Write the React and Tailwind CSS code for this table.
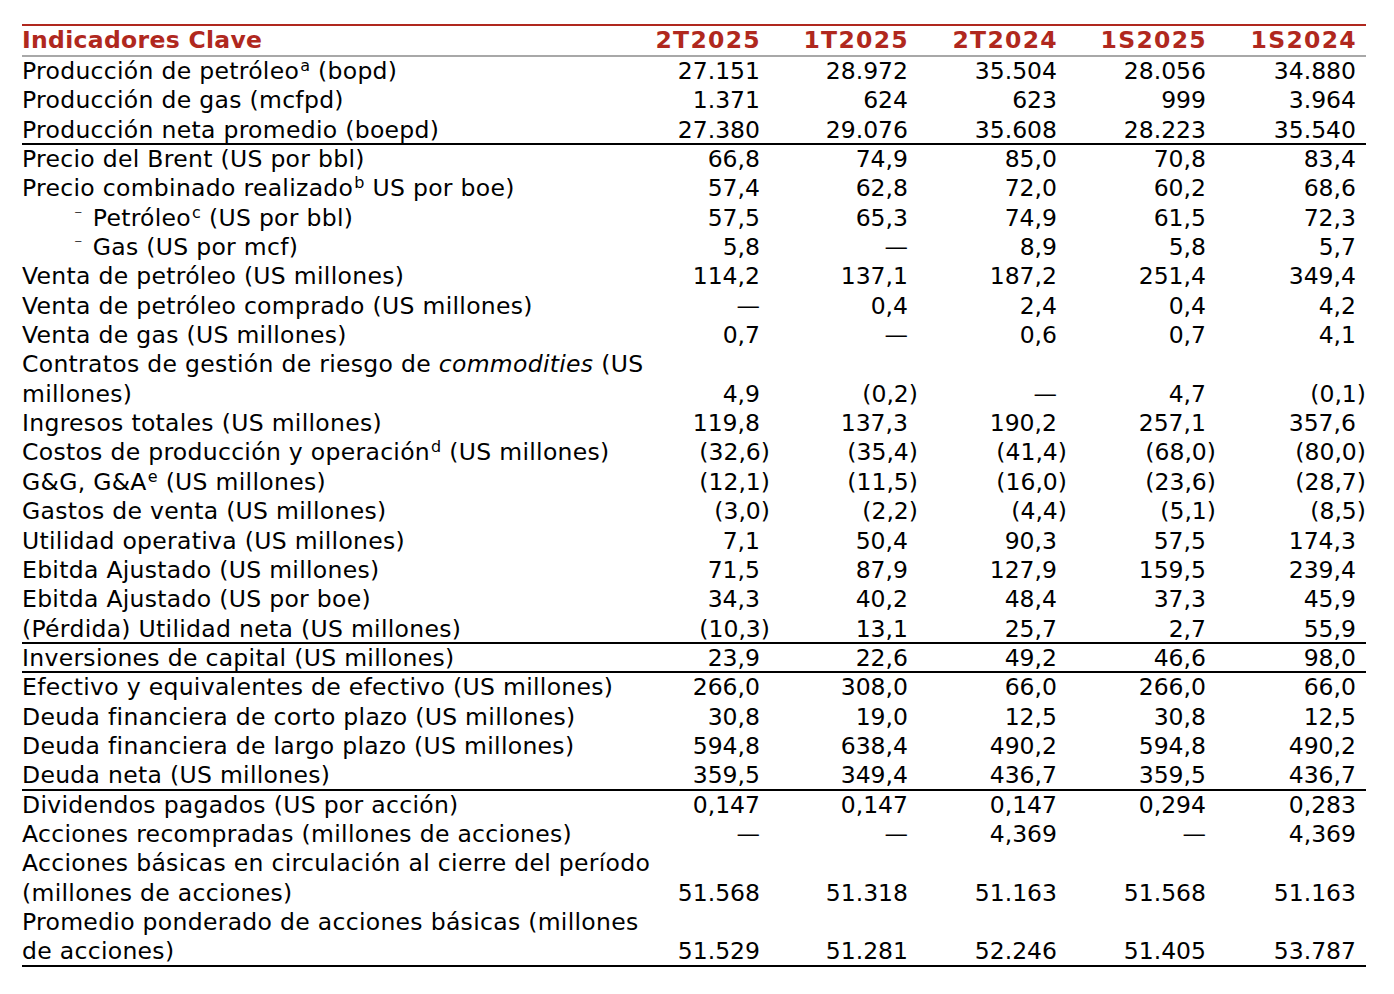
import React from "react";

const RED = "text-[#b0281e]";

const cols = ["2T2025", "1T2025", "2T2024", "1S2025", "1S2024"];

const Sup = ({ children }) => <sup className="text-[16px] ml-[1px]">{children}</sup>;

const rows = [
  { label: <>Producción de petróleo<Sup>a</Sup> (bopd)</>, v: ["27.151", "28.972", "35.504", "28.056", "34.880"] },
  { label: "Producción de gas (mcfpd)", v: ["1.371", "624", "623", "999", "3.964"] },
  { label: "Producción neta promedio (boepd)", v: ["27.380", "29.076", "35.608", "28.223", "35.540"], line: true },
  { label: "Precio del Brent (US por bbl)", v: ["66,8", "74,9", "85,0", "70,8", "83,4"] },
  { label: <>Precio combinado realizado<Sup>b</Sup> US por boe)</>, v: ["57,4", "62,8", "72,0", "60,2", "68,6"] },
  { label: <>Petróleo<Sup>c</Sup> (US por bbl)</>, sub: true, v: ["57,5", "65,3", "74,9", "61,5", "72,3"] },
  { label: "Gas (US por mcf)", sub: true, v: ["5,8", "—", "8,9", "5,8", "5,7"] },
  { label: "Venta de petróleo (US millones)", v: ["114,2", "137,1", "187,2", "251,4", "349,4"] },
  { label: "Venta de petróleo comprado (US millones)", v: ["—", "0,4", "2,4", "0,4", "4,2"] },
  { label: "Venta de gas (US millones)", v: ["0,7", "—", "0,6", "0,7", "4,1"] },
  {
    label: <>Contratos de gestión de riesgo de <i>commodities</i> (US<br />millones)</>,
    two: true,
    v: ["4,9", "(0,2)", "—", "4,7", "(0,1)"],
  },
  { label: "Ingresos totales (US millones)", v: ["119,8", "137,3", "190,2", "257,1", "357,6"] },
  { label: <>Costos de producción y operación<Sup>d</Sup> (US millones)</>, v: ["(32,6)", "(35,4)", "(41,4)", "(68,0)", "(80,0)"] },
  { label: <>G&amp;G, G&amp;A<Sup>e</Sup> (US millones)</>, v: ["(12,1)", "(11,5)", "(16,0)", "(23,6)", "(28,7)"] },
  { label: "Gastos de venta (US millones)", v: ["(3,0)", "(2,2)", "(4,4)", "(5,1)", "(8,5)"] },
  { label: "Utilidad operativa (US millones)", v: ["7,1", "50,4", "90,3", "57,5", "174,3"] },
  { label: "Ebitda Ajustado (US millones)", v: ["71,5", "87,9", "127,9", "159,5", "239,4"] },
  { label: "Ebitda Ajustado (US por boe)", v: ["34,3", "40,2", "48,4", "37,3", "45,9"] },
  { label: "(Pérdida) Utilidad neta (US millones)", v: ["(10,3)", "13,1", "25,7", "2,7", "55,9"], line: true },
  { label: "Inversiones de capital (US millones)", v: ["23,9", "22,6", "49,2", "46,6", "98,0"], line: true },
  { label: "Efectivo y equivalentes de efectivo (US millones)", v: ["266,0", "308,0", "66,0", "266,0", "66,0"] },
  { label: "Deuda financiera de corto plazo (US millones)", v: ["30,8", "19,0", "12,5", "30,8", "12,5"] },
  { label: "Deuda financiera de largo plazo (US millones)", v: ["594,8", "638,4", "490,2", "594,8", "490,2"] },
  { label: "Deuda neta (US millones)", v: ["359,5", "349,4", "436,7", "359,5", "436,7"], line: true },
  { label: "Dividendos pagados (US por acción)", v: ["0,147", "0,147", "0,147", "0,294", "0,283"] },
  { label: "Acciones recompradas (millones de acciones)", v: ["—", "—", "4,369", "—", "4,369"] },
  {
    label: <>Acciones básicas en circulación al cierre del período<br />(millones de acciones)</>,
    two: true,
    v: ["51.568", "51.318", "51.163", "51.568", "51.163"],
  },
  {
    label: <>Promedio ponderado de acciones básicas (millones<br />de acciones)</>,
    two: true,
    v: ["51.529", "51.281", "52.246", "51.405", "53.787"],
    line: true,
  },
];

const grid = "grid grid-cols-[620px_128px_148px_149px_149px_150px]";

function Cell({ value }) {
  const neg = value.startsWith("(");
  return (
    <div className={`self-end text-right whitespace-nowrap ${neg ? "pr-0" : "pr-[10px]"}`}>
      {value}
    </div>
  );
}

export default function App() {
  return (
    <div
      className="min-h-[994px] bg-white pl-[22px] pt-[24px] text-black text-[23.5px] leading-[29.35px]"
      style={{ fontFamily: "'DejaVu Sans', Verdana, sans-serif" }}
    >
      <div className="w-[1344px]">
        <div className={`${grid} h-[33px] items-center border-t-2 border-b-2 border-t-[#b0281e] border-b-[#a8a8a8] font-bold ${RED}`}>
          <div className="whitespace-nowrap tracking-[0.3px]">Indicadores Clave</div>
          {cols.map((c) => (
            <div key={c} className="text-right pr-[9px] whitespace-nowrap tracking-[1.3px]">{c}</div>
          ))}
        </div>
        {rows.map((r, i) => (
          <div
            key={i}
            className={`${grid} ${r.two ? "h-[58.7px]" : "h-[29.35px]"} ${r.line ? "border-b-2 border-black" : ""}`}
          >
            <div className={`whitespace-nowrap tracking-[0.3px] ${r.sub ? "pl-[52px]" : ""}`}>
              {r.sub && <span className="relative -top-[6px] pr-[10px] text-[16px] leading-none">⁻</span>}
              {r.label}
            </div>
            {r.v.map((v, j) => (
              <Cell key={j} value={v} />
            ))}
          </div>
        ))}
      </div>
    </div>
  );
}
